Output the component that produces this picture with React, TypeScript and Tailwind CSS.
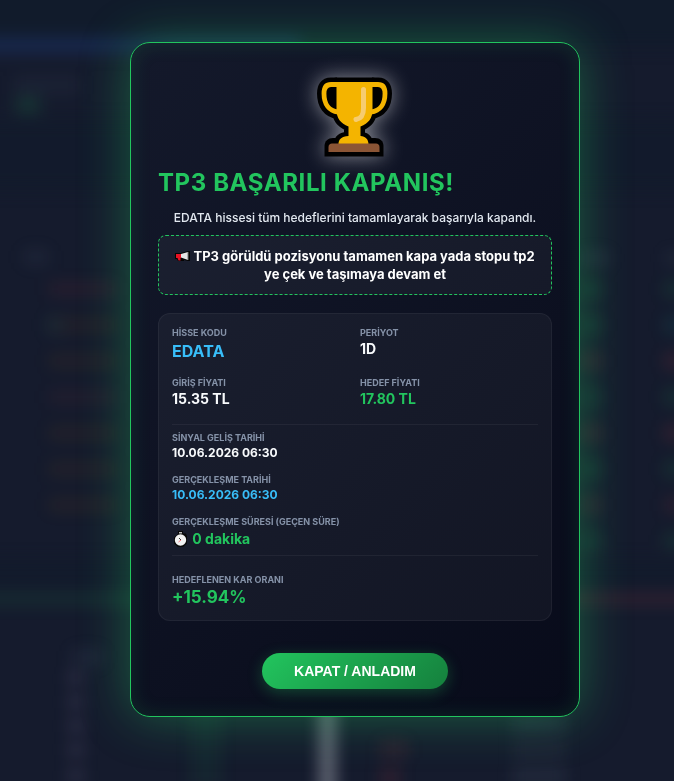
import { useState } from "react";
import type { ReactNode } from "react";

const SIGNAL = {
  code: "EDATA",
  period: "1D",
  entry: "15.35 TL",
  target: "17.80 TL",
  signalDate: "10.06.2026 06:30",
  hitDate: "10.06.2026 06:30",
  elapsed: "0 dakika",
  profit: "+15.94%",
};

// Out-of-focus dashboard behind the dialog: x, y, width, height, colour, opacity
const SMUDGES: [number, number, number, number, string, number][] = [
  [-20, 37, 320, 16, "#1e3a78", 0.45],
  [14, 76, 66, 18, "#64748b", 0.08],
  [16, 96, 24, 18, "#22c55e", 0.14],
  [24, 250, 24, 14, "#64748b", 0.12],
  [48, 282, 70, 14, "#ef4444", 0.08],
  [48, 318, 70, 14, "#d97706", 0.07],
  [46, 318, 16, 14, "#14b8a6", 0.08],
  [48, 354, 70, 14, "#d97706", 0.07],
  [48, 390, 70, 14, "#ef4444", 0.06],
  [48, 426, 70, 14, "#d97706", 0.07],
  [48, 462, 70, 14, "#d97706", 0.07],
  [48, 498, 70, 14, "#d97706", 0.07],
  [-20, 594, 200, 10, "#22c55e", 0.12],
  [560, 594, 140, 10, "#ef4444", 0.14],
  [72, 650, 30, 14, "#64748b", 0.14],
  [68, 672, 16, 12, "#a78bba", 0.18],
  [68, 696, 16, 12, "#a78bba", 0.18],
  [68, 720, 16, 12, "#a78bba", 0.18],
  [68, 744, 16, 12, "#a78bba", 0.18],
  [68, 770, 16, 12, "#a78bba", 0.18],
  [190, 700, 32, 90, "#22c55e", 0.06],
  [319, 690, 17, 110, "#d1d5db", 0.4],
  [380, 740, 28, 18, "#ef4444", 0.1],
  [380, 768, 20, 20, "#ef4444", 0.12],
  [512, 715, 54, 18, "#94a3b8", 0.09],
  [512, 743, 54, 14, "#94a3b8", 0.08],
  [512, 767, 54, 18, "#94a3b8", 0.1],
  [580, 252, 30, 12, "#94a3b8", 0.1],
  [580, 282, 22, 14, "#22c55e", 0.12],
  [580, 318, 22, 14, "#22c55e", 0.12],
  [580, 354, 22, 14, "#ef4444", 0.12],
  [580, 390, 22, 14, "#22c55e", 0.1],
  [580, 426, 22, 14, "#ef4444", 0.12],
  [580, 462, 22, 14, "#22c55e", 0.12],
  [580, 498, 22, 14, "#ef4444", 0.1],
  [580, 534, 22, 14, "#22c55e", 0.1],
  [664, 252, 20, 12, "#94a3b8", 0.08],
  [664, 282, 20, 14, "#22c55e", 0.12],
  [664, 318, 20, 14, "#14b8a6", 0.12],
  [664, 354, 20, 14, "#ef4444", 0.14],
  [664, 390, 20, 14, "#22c55e", 0.12],
  [664, 426, 20, 14, "#ef4444", 0.14],
  [664, 462, 20, 14, "#22c55e", 0.12],
  [664, 498, 20, 14, "#ef4444", 0.1],
  [664, 534, 20, 14, "#22c55e", 0.12],
];

function Backdrop() {
  return (
    <svg
      aria-hidden="true"
      className="absolute inset-0 h-full w-full"
      viewBox="0 0 674 781"
      preserveAspectRatio="xMidYMid slice"
    >
      <defs>
        <filter id="soft" x="-20%" y="-20%" width="140%" height="140%" colorInterpolationFilters="sRGB">
          <feGaussianBlur stdDeviation="8" />
        </filter>
      </defs>
      <g filter="url(#soft)">
        <rect x="-40" y="-40" width="760" height="86" fill="#111b2b" />
        <rect x="-40" y="120" width="760" height="70" fill="#111b2c" opacity=".6" />
        <rect x="-40" y="560" width="760" height="26" fill="#101b2c" opacity=".6" />
        {SMUDGES.map(([x, y, w, h, fill, opacity], i) => (
          <rect key={i} x={x} y={y} width={w} height={h} fill={fill} opacity={opacity} />
        ))}
      </g>
    </svg>
  );
}

function Trophy() {
  const bowl = "M19.500 5h36v28c0 8-4 13.500-12 16.500V59c5 .5 8 3.500 8 8h-30c0-4.500 3-7.500 10-8v-9.500c-8-3-12-8.500-12-16.500z";
  const left = "M20 7.500h-6C9 7.500 7 11 7 16.500 7 27 12 34 21 35";
  const right = "M55 7.500h6c5 0 7 3.500 7 9C68 27 63 34 54 35";
  return (
    <svg
      aria-label="Kupa"
      role="img"
      className="h-20 w-[76px] overflow-visible drop-shadow-[0_0_10px_rgba(255,255,255,0.5)]"
      viewBox="0 0 76 80"
    >
      {/* outline */}
      <g fill="#000" stroke="#000" strokeLinejoin="round">
        <path d={left} strokeWidth="14" />
        <path d={right} strokeWidth="14" />
        <path d={bowl} strokeWidth="9" />
        <path d="M7.500 79.500V69c0-5 3.500-8 8.500-8h42c5 0 8.500 3 8.500 8v10.500z" stroke="none" />
      </g>
      <g fill="none" stroke="#f4b400" strokeWidth="4.800">
        <path d={left} />
        <path d={right} />
      </g>
      <path d={bowl} fill="#f4b400" />
      <path d="M11.500 75v-5c0-2 1.500-3.500 3.500-3.500h44c2 0 3.500 1.500 3.500 3.500v5z" fill="#8b5535" />
      <path d="M46.500 12.500V31c0 7-2 10.500-7.500 11.500" fill="none" stroke="#f6cc70" strokeWidth="5" strokeLinecap="round" />
    </svg>
  );
}

function Megaphone() {
  return (
    <svg aria-hidden="true" className="inline-block h-3 w-[15px] align-[-1px]" viewBox="0 0 15 12">
      <path d="M0 3h6l7-2h2v10h-2l-4-1v1H3L2 9H0z" fill="#050505" />
      <path d="M1 4h5v4h-.5v2.500h-2L2.500 8H1z" fill="#e81224" />
      <path d="M6 4l7-2v8L6 7.500z" fill="#e5e5e5" />
      <path d="M12.500 2h1v8h-1z" fill="#777" />
    </svg>
  );
}

function Stopwatch() {
  return (
    <svg aria-hidden="true" className="mx-px inline-block h-4 w-[15px] align-[-3px]" viewBox="0 0 15 16">
      <path d="M5 0h5v2.500l3 0 1 3v7L10 16H5L1 12.500v-6L5 3z" fill="#080808" />
      <path d="M6 1h3v1.500H6z" fill="#bbb" />
      <circle cx="7.500" cy="9" r="5.700" fill="#f2f2f2" />
      <path d="M6 7l2 2" stroke="#333" />
      <path d="M8 9l-2.500 2" stroke="#ef5360" strokeWidth=".8" />
    </svg>
  );
}

function Field({ label, valueClass, children }: { label: string; valueClass: string; children: ReactNode }) {
  return (
    <div>
      <dt className="text-[9px] leading-3 font-bold text-[#8592a8]">{label}</dt>
      <dd className={`font-bold ${valueClass}`}>{children}</dd>
    </div>
  );
}

export default function App() {
  const [open, setOpen] = useState(true);

  return (
    <div className="relative flex min-h-screen items-center justify-center overflow-hidden bg-[#151b2d] pb-[22px] pl-9 font-['Inter','Noto_Sans',sans-serif]">
      <Backdrop />
      {open && (
        <div
          role="dialog"
          aria-modal="true"
          aria-labelledby="dialog-title"
          className="relative w-full max-w-[450px] rounded-[20px] border border-[#22c55e] bg-linear-135 from-[#14192b] to-[#080b1a] p-[27px] shadow-[0_0_50px_rgba(34,197,94,0.4),inset_0_0_20px_rgba(34,197,94,0.15)]"
        >
          <div className="flex justify-center pt-[7px]">
            <Trophy />
          </div>
          <h2 id="dialog-title" className="mt-2 text-2xl leading-9 font-bold tracking-wide text-[#22c55e]">
            TP3 BAŞARILI KAPANIŞ!
          </h2>
          <p className="mt-[7px] text-center text-[12px] leading-5 font-medium text-[#e2e8f0]">
            {SIGNAL.code} hissesi tüm hedeflerini tamamlayarak başarıyla kapandı.
          </p>
          <p className="mt-[7px] rounded-lg border border-dashed border-[#22c55e] bg-white/4 px-3 py-[11px] text-center text-[13px] leading-[18px] font-bold text-white">
            <Megaphone /> TP3 görüldü pozisyonu tamamen kapa yada stopu tp2 ye çek ve taşımaya devam et
          </p>

          <dl className="mt-[18px] rounded-xl border border-white/5 bg-white/4 px-[13px] pt-[13px] pb-3">
            <div className="grid grid-cols-2 gap-x-[10px] gap-y-[14px] border-b border-white/5 pb-[15px]">
              <Field label="HİSSE KODU" valueClass="text-base leading-6 text-[#38bdf8]">
                {SIGNAL.code}
              </Field>
              <Field label="PERİYOT" valueClass="text-sm leading-5 text-[#f8fafc]">
                {SIGNAL.period}
              </Field>
              <Field label="GİRİŞ FİYATI" valueClass="text-sm leading-5 text-[#f8fafc]">
                {SIGNAL.entry}
              </Field>
              <Field label="HEDEF FİYATI" valueClass="text-sm leading-5 text-[#22c55e]">
                {SIGNAL.target}
              </Field>
            </div>
            <div className="flex flex-col gap-3 border-b border-white/5 pt-[7px] pb-[5px]">
              <Field label="SİNYAL GELİŞ TARİHİ" valueClass="text-[12px] leading-[18px] text-[#f8fafc]">
                {SIGNAL.signalDate}
              </Field>
              <Field label="GERÇEKLEŞME TARİHİ" valueClass="text-[12px] leading-[18px] text-[#38bdf8]">
                {SIGNAL.hitDate}
              </Field>
              <Field label="GERÇEKLEŞME SÜRESİ (GEÇEN SÜRE)" valueClass="text-sm leading-[22px] text-[#22c55e]">
                <Stopwatch /> {SIGNAL.elapsed}
              </Field>
            </div>
            <div className="pt-[18px]">
              <Field label="HEDEFLENEN KAR ORANI" valueClass="text-[17px] leading-[22px] text-[#22c55e]">
                {SIGNAL.profit}
              </Field>
            </div>
          </dl>

          <div className="mt-8 flex justify-center">
            <button
              type="button"
              onClick={() => setOpen(false)}
              className="cursor-pointer rounded-full bg-linear-135 from-[#22c55e] to-[#15803d] px-8 py-2 font-['Liberation_Sans',Arial,sans-serif] text-sm leading-5 font-bold text-white shadow-[0_4px_15px_rgba(34,197,94,0.3)]"
            >
              KAPAT / ANLADIM
            </button>
          </div>
        </div>
      )}
    </div>
  );
}
